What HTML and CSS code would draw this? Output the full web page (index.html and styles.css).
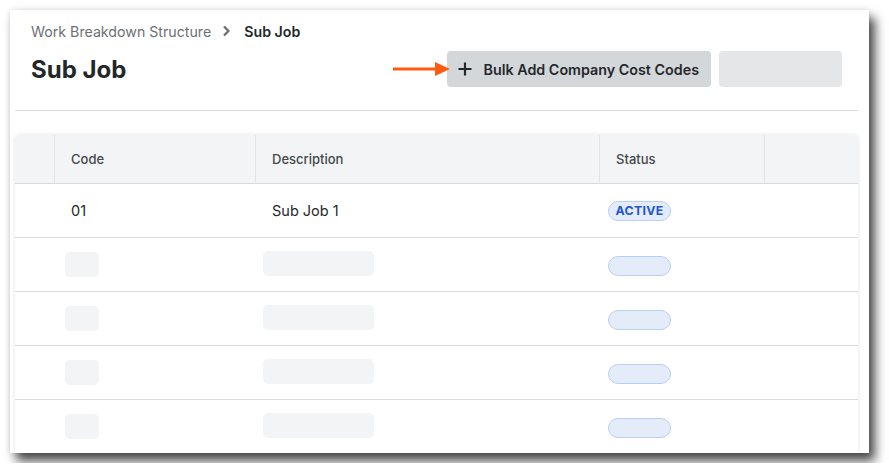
FILE: index.html
```html
<!DOCTYPE html>
<html lang="en">
<head>
  <meta charset="UTF-8">
  <meta name="viewport" content="width=device-width, initial-scale=1.0">
  <title>Sub Job</title>
  <link rel="stylesheet" href="styles.css">
</head>
<body>
  <div class="panel">
    <div class="page-head">
      <div class="breadcrumb">
        <span class="crumb-link">Work Breakdown Structure</span>
        <svg class="crumb-sep" width="10" height="12" viewBox="0 0 10 12"><path d="M3 1.5 L7.5 6 L3 10.5" fill="none" stroke="#6b7075" stroke-width="2.4" stroke-linejoin="round"/></svg>
        <span class="crumb-current">Sub Job</span>
      </div>
      <div class="title-row">
        <div class="title">Sub Job</div>
        <div class="actions">
          <svg class="pointer" width="58" height="16" viewBox="0 0 58 16"><path d="M0 8 H44" stroke="#ff5b0f" stroke-width="3.2"/><path d="M42 1 L57 8 L42 15 Z" fill="#ff5b0f"/></svg>
          <div class="btn btn-primary">
            <svg width="14" height="14" viewBox="0 0 14 14"><path d="M7 0.5 V13.5 M0.5 7 H13.5" stroke="#25282b" stroke-width="2.2"/></svg>
            <span>Bulk Add Company Cost Codes</span>
          </div>
          <div class="btn btn-blank"></div>
        </div>
      </div>
    </div>

    <div class="table-card">
      <div class="table-row table-head">
        <div class="cell"></div>
        <div class="cell">Code</div>
        <div class="cell">Description</div>
        <div class="cell">Status</div>
        <div class="cell"></div>
      </div>
      <div class="table-row">
        <div class="cell"></div>
        <div class="cell text">01</div>
        <div class="cell text">Sub Job 1</div>
        <div class="cell badge-cell"><span class="badge">ACTIVE</span></div>
        <div class="cell"></div>
      </div>
      <div class="table-row">
        <div class="cell"></div>
        <div class="cell sk-cell-code"><span class="sk sk-code"></span></div>
        <div class="cell sk-cell-desc"><span class="sk sk-desc"></span></div>
        <div class="cell badge-cell"><span class="badge badge-empty"></span></div>
        <div class="cell"></div>
      </div>
      <div class="table-row">
        <div class="cell"></div>
        <div class="cell sk-cell-code"><span class="sk sk-code"></span></div>
        <div class="cell sk-cell-desc"><span class="sk sk-desc"></span></div>
        <div class="cell badge-cell"><span class="badge badge-empty"></span></div>
        <div class="cell"></div>
      </div>
      <div class="table-row">
        <div class="cell"></div>
        <div class="cell sk-cell-code"><span class="sk sk-code"></span></div>
        <div class="cell sk-cell-desc"><span class="sk sk-desc"></span></div>
        <div class="cell badge-cell"><span class="badge badge-empty"></span></div>
        <div class="cell"></div>
      </div>
      <div class="table-row">
        <div class="cell"></div>
        <div class="cell sk-cell-code"><span class="sk sk-code"></span></div>
        <div class="cell sk-cell-desc"><span class="sk sk-desc"></span></div>
        <div class="cell badge-cell"><span class="badge badge-empty"></span></div>
        <div class="cell"></div>
      </div>
    </div>
  </div>
</body>
</html>
```

FILE: styles.css
```css
body {
  margin: 0;
  background-color: #ffffff;
  font-family: 'Inter', 'Liberation Sans', sans-serif;
  color: #232729;
}

.panel {
  margin: 10px;
  width: 859px;
  height: 443px;
  box-sizing: border-box;
  padding: 0 11px 0 5px;
  background-color: #ffffff;
  overflow: hidden;
  box-shadow: 0 0 6px rgba(0, 0, 0, 0.12), 6px 8px 10px rgba(0, 0, 0, 0.7);
}

.page-head {
  height: 101px;
  padding: 11px 16px 0 16px;
  box-sizing: border-box;
  border-bottom: 1px solid #dadcdf;
}

.breadcrumb {
  display: flex;
  align-items: center;
  height: 20px;
  font-size: 14.2px;
}

.crumb-link {
  color: #6b7075;
}

.crumb-sep {
  margin: 0 13px 0 10px;
}

.crumb-current {
  font-weight: 600;
  color: #232729;
}

.title-row {
  display: flex;
  align-items: center;
  height: 36px;
  margin-top: 10px;
}

.title {
  font-size: 24px;
  font-weight: 700;
  color: #232729;
}

.actions {
  margin-left: auto;
  display: flex;
  align-items: center;
  gap: 8px;
}

.pointer {
  margin-right: -12px;
  position: relative;
  z-index: 1;
}

.btn {
  height: 36px;
  border-radius: 4px;
  box-sizing: border-box;
}

.btn-primary {
  display: flex;
  align-items: center;
  gap: 12px;
  padding: 0 12px 0 11px;
  background-color: #d4d7da;
  font-size: 14.3px;
  font-weight: 600;
  color: #25282b;
}

.btn-blank {
  width: 123px;
  background-color: #e4e6e8;
}

.table-card {
  margin-top: 24px;
  border-radius: 4px 4px 0 0;
  box-shadow: 0 0 4px rgba(0, 0, 0, 0.12);
  background-color: #ffffff;
}

.table-row {
  display: grid;
  grid-template-columns: 39px 201px 344px 165px 1fr;
  height: 54px;
  border-bottom: 1px solid #d9dbdd;
  box-sizing: border-box;
}

.table-head {
  height: 49px;
  background-color: #f3f4f6;
  border-radius: 4px 4px 0 0;
  font-size: 13px;
  font-weight: 500;
  color: #44484c;
}

.table-head .cell {
  border-left: 1px solid #e3e5e8;
}

.table-head .cell:first-child {
  border-left: none;
}

.cell {
  display: flex;
  align-items: center;
  padding-left: 16px;
}

.cell:first-child {
  padding-left: 0;
}

.text {
  padding-left: 17px;
  font-size: 14.5px;
  color: #232729;
}

.badge-cell {
  padding-left: 9px;
}

.badge {
  display: inline-flex;
  align-items: center;
  justify-content: center;
  width: 63px;
  height: 20px;
  box-sizing: border-box;
  border: 1px solid #b9cff3;
  border-radius: 10px;
  background-color: #e4ecfa;
  font-size: 12.3px;
  font-weight: 700;
  letter-spacing: 0.3px;
  color: #2456d3;
}

.badge-empty {
  margin-top: 2px;
}

.sk {
  display: block;
  background-color: #f3f4f6;
  border-radius: 5px;
  height: 25px;
}

.sk-cell-code {
  padding-left: 11px;
}

.sk-cell-desc {
  padding-left: 8px;
}

.sk-code {
  width: 34px;
}

.sk-desc {
  width: 111px;
  margin-top: -2px;
}
```
